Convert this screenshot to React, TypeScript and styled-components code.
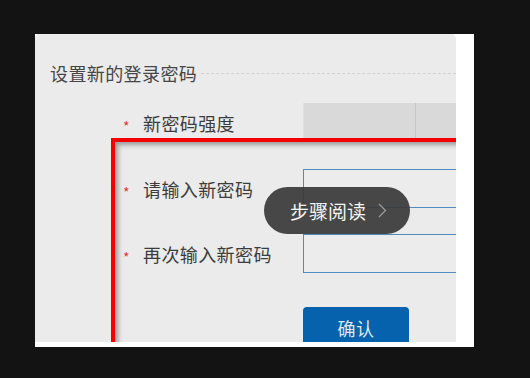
import React from 'react';
import styled, { createGlobalStyle } from 'styled-components';

const GlobalStyle = createGlobalStyle`
  html, body {
    margin: 0;
    padding: 0;
    background: #131313;
  }
  body {
    font-family: "Noto Sans CJK SC", "Noto Sans", sans-serif;
  }
`;

const Stage = styled.div`
  width: 530px;
  height: 378px;
  padding: 34px 0 0 35px;
  box-sizing: border-box;
  overflow: hidden;
`;

// 截图外面那层白边
const Card = styled.div`
  width: 439px;
  height: 313px;
  background: #fff;
  padding: 0 18px 5px 0;
  box-sizing: border-box;
`;

const Panel = styled.div`
  position: relative;
  width: 421px;
  height: 308px;
  background: #ebebeb;
  border-radius: 5px 5px 0 0;
  overflow: hidden;
`;

const TitleRow = styled.div`
  display: flex;
  align-items: center;
  gap: 4px;
  padding: 27px 0 0 15px;
`;

const Title = styled.div`
  font-size: 18px;
  line-height: 24px;
  letter-spacing: 0.4px;
  color: #464646;
  white-space: nowrap;
`;

const DottedLine = styled.div`
  flex: 1;
  border-top: 1px dashed #d2d2d2;
`;

const Form = styled.div`
  display: flex;
  flex-direction: column;
  padding-top: 18px;
`;

interface IRow {
  gap: number;
  top?: boolean;
}

const Row = styled.div<IRow>`
  display: flex;
  align-items: ${(props) => (props.top ? 'flex-start' : 'center')};
  margin-top: ${(props) => props.gap}px;
`;

interface ILabel {
  shift?: number;
}

const LabelCell = styled.div<ILabel>`
  width: 268px;
  flex-shrink: 0;
  display: flex;
  align-items: center;
  padding-left: 88px;
  padding-top: ${(props) => props.shift || 0}px;
  box-sizing: border-box;
`;

const Star = styled.span`
  width: 20px;
  font-size: 14px;
  line-height: 12px;
  color: #e8343a;
  padding-top: 6px;
`;

const LabelText = styled.span`
  font-size: 18px;
  line-height: 24px;
  letter-spacing: 0.4px;
  color: #3c3c3c;
  white-space: nowrap;
`;

const StrengthBar = styled.div`
  display: flex;
  height: 36px;
  gap: 1px;
  background: #c6c6c6;
  border-left: 1px solid #e0e0e0;
`;

const StrengthCell = styled.div`
  width: 111px;
  background: #d9d9d9;
`;

const Input = styled.div`
  width: 220px;
  height: 39px;
  flex-shrink: 0;
  border: 1.5px solid #4f8ac3;
  box-sizing: border-box;
  background: #ececec;
`;

const Button = styled.div`
  width: 106px;
  height: 42px;
  margin-left: 268px;
  background: #0762ad;
  border-radius: 4px;
  color: #dfe7f0;
  font-size: 18px;
  line-height: 42px;
  text-align: center;
  letter-spacing: 0.5px;
`;

// 红色标注框，盖在表单上
const Highlight = styled.div`
  position: absolute;
  left: 76px;
  top: 104px;
  width: 500px;
  height: 400px;
  border: 4px solid #f50000;
  box-shadow: inset 3px 3px 5px rgba(0, 0, 0, 0.35);
  pointer-events: none;
`;

const Pill = styled.div`
  position: absolute;
  left: 229px;
  top: 153px;
  width: 146px;
  height: 47px;
  border-radius: 24px;
  background: rgba(58, 58, 58, 0.93);
  display: flex;
  align-items: center;
  padding-left: 26px;
  box-sizing: border-box;
  gap: 12px;
`;

const PillText = styled.span`
  font-size: 19px;
  line-height: 24px;
  color: #f4f4f4;
  white-space: nowrap;
`;

function Chevron() {
  return (
    <svg width="9" height="15" viewBox="0 0 9 15">
      <path d="M1 1 L7.5 7.5 L1 14" fill="none" stroke="#9a9a9a" strokeWidth="1.3" />
    </svg>
  );
}

function App() {
  return (
    <>
      <GlobalStyle />
      <Stage>
        <Card>
          <Panel>
            <TitleRow>
              <Title>设置新的登录密码</Title>
              <DottedLine />
            </TitleRow>
            <Form>
              <Row gap={0} top>
                <LabelCell shift={8}>
                  <Star>*</Star>
                  <LabelText>新密码强度</LabelText>
                </LabelCell>
                <StrengthBar>
                  <StrengthCell />
                  <StrengthCell />
                </StrengthBar>
              </Row>
              <Row gap={30}>
                <LabelCell>
                  <Star>*</Star>
                  <LabelText>请输入新密码</LabelText>
                </LabelCell>
                <Input />
              </Row>
              <Row gap={26}>
                <LabelCell shift={1}>
                  <Star>*</Star>
                  <LabelText>再次输入新密码</LabelText>
                </LabelCell>
                <Input />
              </Row>
              <Row gap={34}>
                <Button>确认</Button>
              </Row>
            </Form>
            <Highlight />
            <Pill>
              <PillText>步骤阅读</PillText>
              <Chevron />
            </Pill>
          </Panel>
        </Card>
      </Stage>
    </>
  );
}

export default App;
